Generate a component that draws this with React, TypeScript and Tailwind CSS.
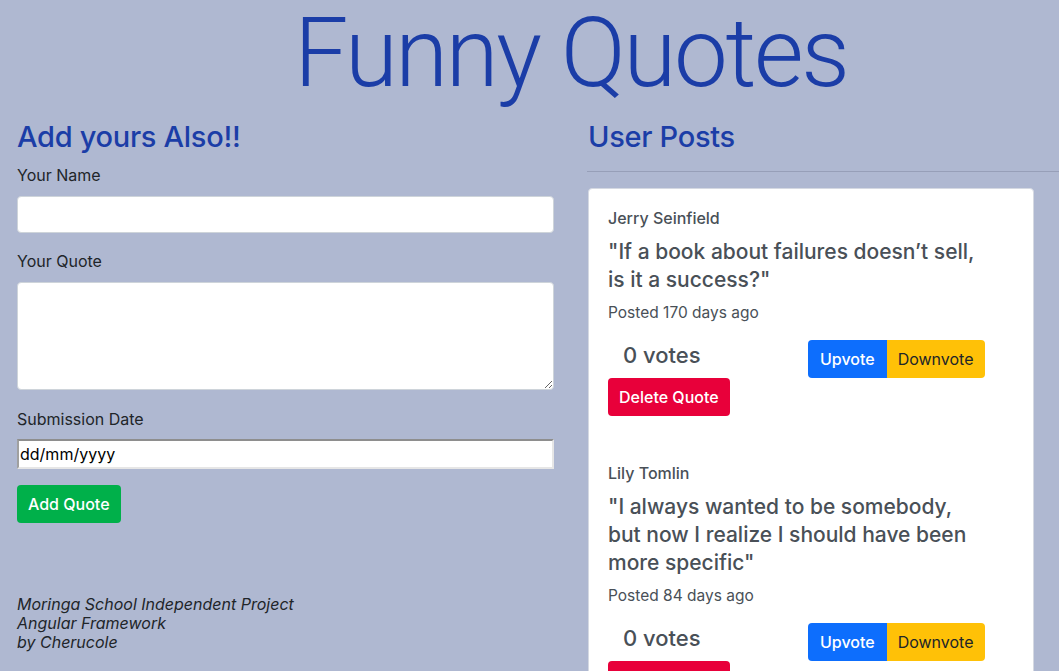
import React from "react";

const font = { fontFamily: "Inter, 'Noto Sans', sans-serif" };

function Post({ name, quote, posted }: { name: string; quote: string; posted: string }) {
  return (
    <div className="text-[#495057]">
      <div className="text-[16px] leading-[22px] font-medium">{name}</div>
      <div className="mt-[9px] text-[21px] leading-[28px] font-medium w-[380px]">{quote}</div>
      <div className="mt-[8px] text-[15.5px] leading-[22px]">{posted}</div>
      <div className="mt-[16px] flex items-start">
        <div className="w-[200px] pl-[15px] pt-[1px] text-[22px] leading-[29px] font-medium">0 votes</div>
        <button className="h-[38px] px-3 bg-[#0d6efd] text-white text-[16px] font-medium rounded-l-[4px]">Upvote</button>
        <button className="h-[38px] px-[11px] bg-[#ffc107] text-[#212529] text-[16px] rounded-r-[4px]">Downvote</button>
      </div>
      <button className="h-[38px] px-[11px] bg-[#e8003a] text-white text-[16px] font-medium rounded-[4px]">Delete Quote</button>
    </div>
  );
}

export default function App() {
  return (
    <div className="w-screen h-screen overflow-hidden bg-[#afb8d1]" style={font}>
      <div className="w-[1142px]">
        <h1
          className="pt-[5px] text-center text-[96px] leading-[96px] font-light tracking-[-2.3px] text-[#1b3da7]"
          style={{ fontFamily: "Roboto, Inter, sans-serif" }}
        >
          Funny Quotes
        </h1>
        <div className="mt-[18px] flex">
          <div className="w-[571px] px-[17px]">
            <h2 className="text-[29px] tracking-[-0.3px] leading-[36px] font-medium text-[#1b3da7]">Add yours Also!!</h2>
            <label className="block mt-[8px] text-[16px] leading-[24px] text-[#212529]">Your Name</label>
            <input className="block mt-[9px] w-full h-[37px] bg-white rounded-[4px] border border-[#ced4da]" />
            <label className="block mt-[16px] text-[16px] leading-[24px] text-[#212529]">Your Quote</label>
            <textarea className="block mt-[9px] w-full h-[108px] bg-white rounded-[4px] border border-[#ced4da]" />
            <label className="block mt-[17px] text-[16px] leading-[24px] text-[#212529]">Submission Date</label>
            <input
              readOnly
              defaultValue="dd/mm/yyyy"
              className="block mt-[8px] w-full h-[30px] bg-white border-2 border-t-[#8e8e8e] border-l-[#a0a0a0] border-r-[#e6e6e6] border-b-[#e6e6e6] px-[1px] text-[16px] text-black outline-none"
            />
            <button className="mt-[16px] h-[38px] px-[11px] bg-[#00b04a] text-white text-[16px] font-medium rounded-[4px]">Add Quote</button>
            <div className="mt-[72px] italic text-[16px] leading-[19px] text-[#212529]">
              <div>Moringa School Independent Project</div>
              <div>Angular Framework</div>
              <div>by Cherucole</div>
            </div>
          </div>
          <div className="w-[571px] px-[17px]">
            <h2 className="text-[29px] tracking-[-0.3px] leading-[36px] font-medium text-[#1b3da7]">User Posts</h2>
            <div className="mt-[16px] -ml-[1px] h-px bg-[#979fb8]" />
            <div className="mt-[16px] w-[446px] bg-white rounded-[4px] border border-[#d5d9e2] pt-[18px] px-[19px] pb-8">
              <Post name="Jerry Seinfield" quote={"\"If a book about failures doesn\u2019t sell, is it a success?\""} posted="Posted 170 days ago" />
              <div className="h-[46px]" />
              <Post name="Lily Tomlin" quote={"\"I always wanted to be somebody, but now I realize I should have been more specific\""} posted="Posted 84 days ago" />
            </div>
          </div>
        </div>
      </div>
    </div>
  );
}
